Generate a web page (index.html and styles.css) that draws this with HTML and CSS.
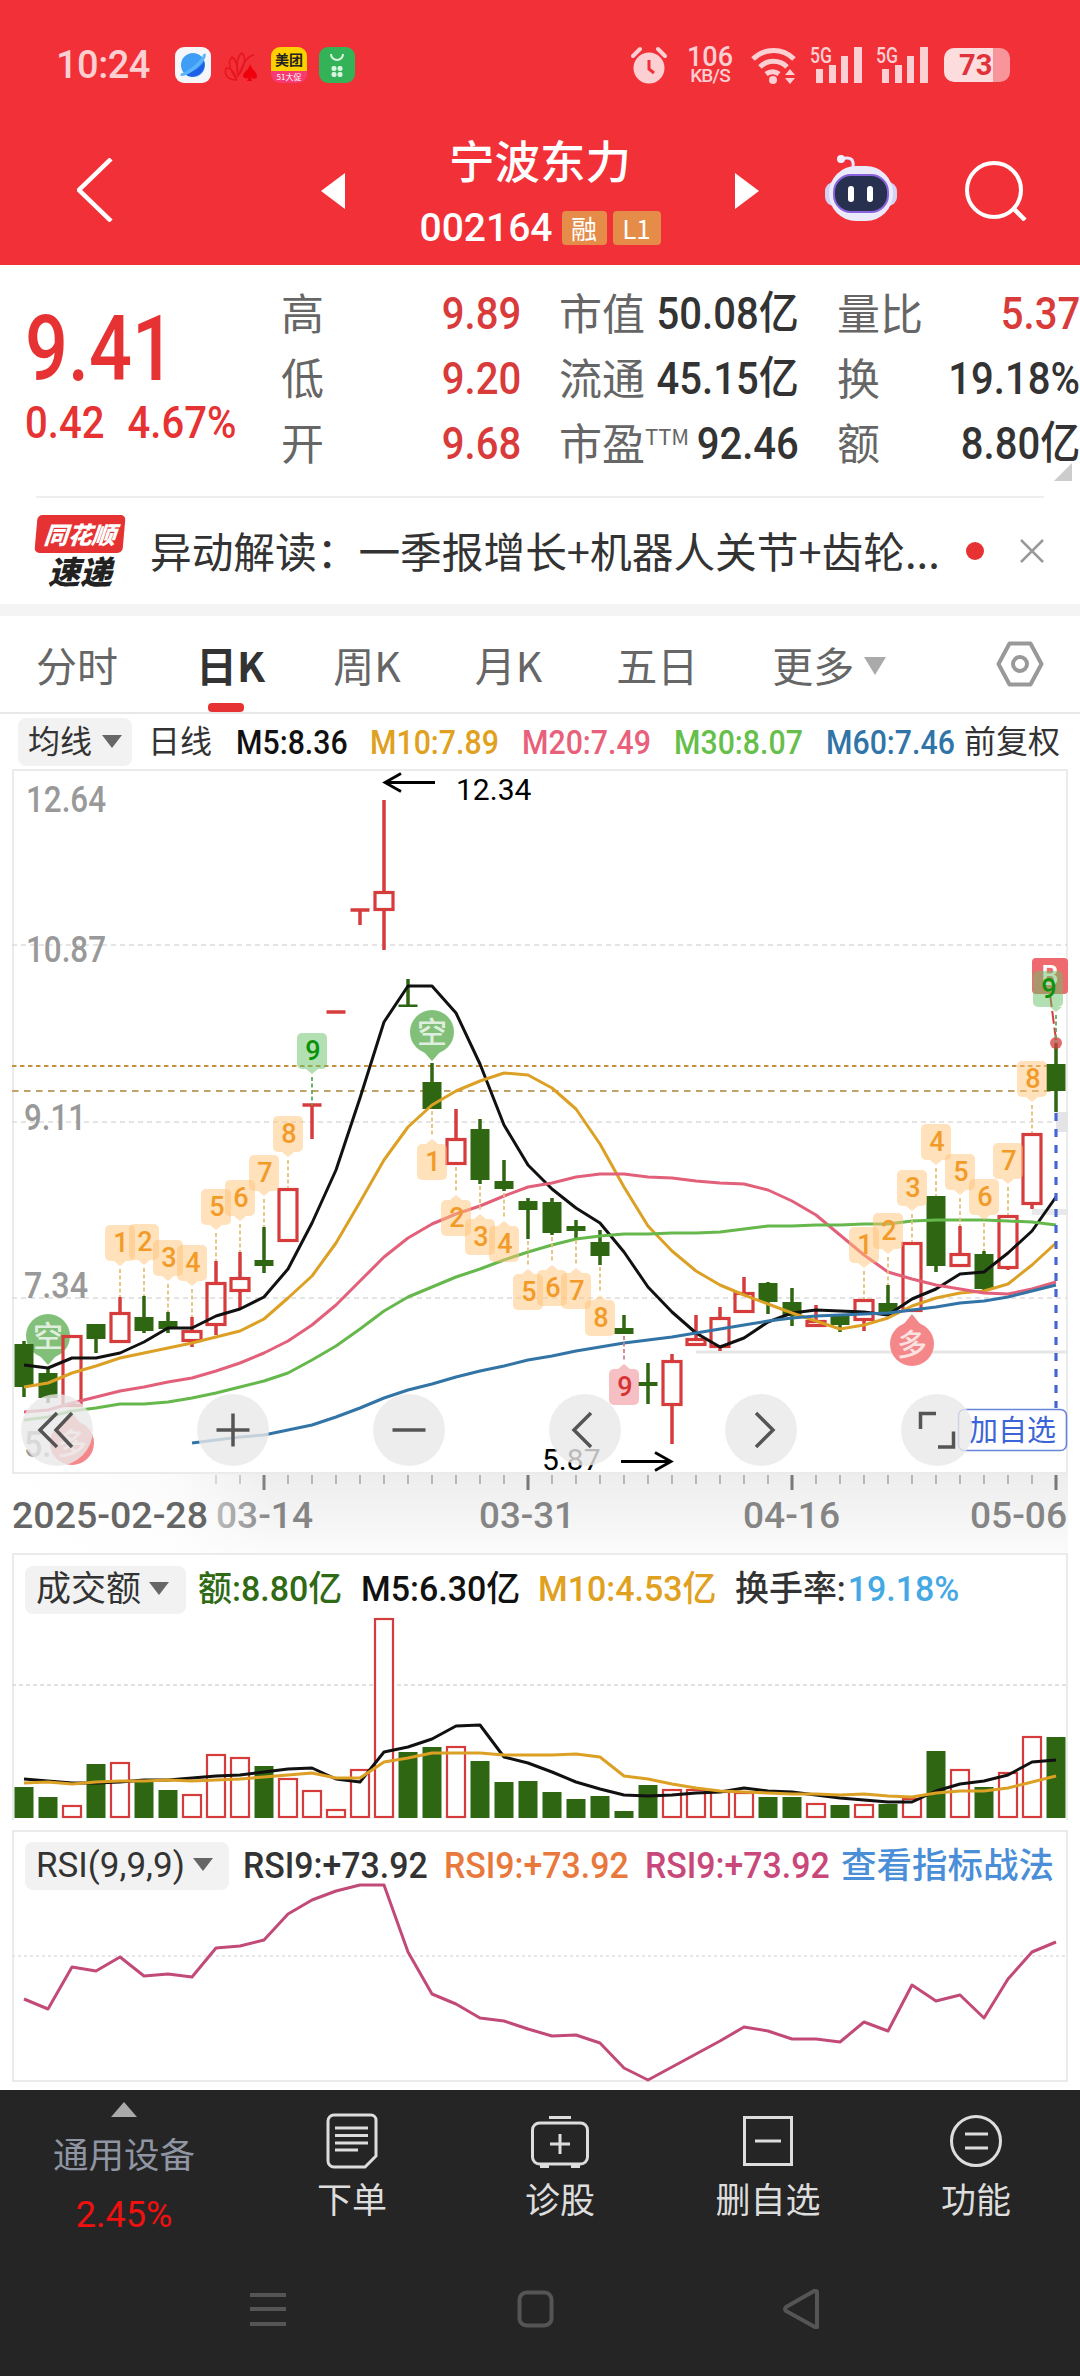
FILE: index.html
```html
<!DOCTYPE html>
<html lang="zh-CN">
<head>
    <meta charset="UTF-8">
    <meta name="viewport" content="width=device-width, initial-scale=1.0">
    <title>宁波东力 002164</title>
    <link rel="stylesheet" href="styles.css">
</head>
<body>
    <div class="top">
        <div class="status">
            <span class="clock">10:24</span>
            <div class="apps">
                <svg width="36" height="36" viewBox="0 0 36 36"><rect width="36" height="36" rx="9" fill="#f4f6fa"/><circle cx="18" cy="18" r="12" fill="#3f9df5"/><path d="M29 14a12 12 0 0 1-19 13C17 26 26 20 29 14z" fill="#1d5fe8"/><path d="M6 27C10 30 32 12 29 7" fill="none" stroke="#5cb4fa" stroke-width="3"/></svg>
                <svg width="36" height="36" viewBox="0 0 36 36"><g fill="none" stroke="#e8141f" stroke-width="1.500"><path d="M14 33C4 33 1 27 3 21c5 0 9 4 11 12C6 22 5 14 9 10c5 3 6 11 6 20C13 19 14 9 19 6c4 4 3 12-3 22C20 16 24 9 31 8"/></g><path d="M27 17c2 6 7 8 7 12 0 3-4 4-6 1l1 4h-5l2-4c-3 3-6 1-6-1 0-4 6-6 7-12z" fill="#f0000c"/></svg>
                <div class="app-mt"><b>美团</b><i>51大促</i></div>
                <svg width="36" height="36" viewBox="0 0 36 36"><rect width="36" height="36" rx="9" fill="#34b257"/><path d="M12 7a6 6 0 0 0 12 0" fill="none" stroke="#d8f5df" stroke-width="2"/><g fill="#d8f5df"><rect x="12.500" y="19" width="5" height="5" rx="2"/><rect x="18.500" y="19" width="5" height="5" rx="2"/><rect x="12.500" y="25" width="5" height="5" rx="2"/><rect x="18.500" y="25" width="5" height="5" rx="2"/></g></svg>
            </div>
            <div class="signals">
                <svg class="alarm" width="36" height="38" viewBox="0 0 36 38"><circle cx="18" cy="22" r="15.500" fill="#fccfd2"/><path d="M2 10 9 3M34 10 27 3" stroke="#fccfd2" stroke-width="4" stroke-linecap="round"/><path d="M18 14v9l5 4" fill="none" stroke="#f03038" stroke-width="3"/></svg>
                <div class="speed"><b>106</b><span>KB/S</span></div>
                <svg class="wifi" width="46" height="38" viewBox="0 0 46 38"><g fill="none" stroke="#fccfd2" stroke-width="5"><path d="M2 13a29 29 0 0 1 41 0"/><path d="M9 21a19 19 0 0 1 27 0"/><path d="M15 28a11 11 0 0 1 13 0"/></g><circle cx="22" cy="34" r="4" fill="#fccfd2"/><path d="M34 29l5-6 5 6zM34 32l5 6 5-6z" fill="#fccfd2"/></svg>
                <svg class="cell" width="54" height="38" viewBox="0 0 54 38"><text x="0" y="17" textLength="22" lengthAdjust="spacingAndGlyphs">5G</text><path d="M6 23h7v14h-7zM19 19h7v18h-7zM31 10h7v27h-7zM44 1h8v36h-8z"/></svg>
                <svg class="cell" width="54" height="38" viewBox="0 0 54 38"><text x="0" y="17" textLength="22" lengthAdjust="spacingAndGlyphs">5G</text><path d="M6 23h7v14h-7zM19 19h7v18h-7zM31 10h7v27h-7zM44 1h8v36h-8z"/></svg>
                <div class="battery"><span>73</span></div>
            </div>
        </div>
        <div class="header">
            <svg class="back" width="36" height="64" viewBox="0 0 36 64"><path d="M34 1 2 32l32 31" fill="none" stroke="#fff" stroke-width="4.500"/></svg>
            <svg class="prev" width="24" height="36" viewBox="0 0 24 36"><path d="M0 18 24 0v36z" fill="#fff"/></svg>
            <div class="stock">
                <div class="name">宁波东力</div>
                <div class="code"><span>002164</span><i>融</i><i class="l1">L1</i></div>
            </div>
            <svg width="24" height="36" viewBox="0 0 24 36"><path d="M24 18 0 0v36z" fill="#fff"/></svg>
            <svg class="robot" width="72" height="68" viewBox="0 0 72 68">
                <path d="M17 4C26 1 29 5 28 12" fill="none" stroke="#e8e6fa" stroke-width="3"/><circle cx="16" cy="4" r="4" fill="#f0effc"/>
                <rect x="0" y="27" width="72" height="24" rx="9" fill="#d4d2f4"/>
                <rect x="4" y="11" width="64" height="55" rx="27" fill="#ebeafb"/>
                <rect x="9" y="20" width="54" height="37" rx="17" fill="#27304f" stroke="#8a62dc" stroke-width="2"/>
                <rect x="23" y="31" width="6" height="16" rx="3" fill="#fff"/><rect x="42" y="31" width="6" height="16" rx="3" fill="#fff"/>
            </svg>
            <svg class="search" width="62" height="60" viewBox="0 0 62 60"><circle cx="29" cy="29" r="27" fill="none" stroke="#fff" stroke-width="4"/><path d="M48 47 60 59" stroke="#fff" stroke-width="4.500"/></svg>
        </div>
    </div>

    <div class="quote">
        <div class="price">
            <div class="last">9.41</div>
            <div class="change"><span>0.42</span><span>4.67%</span></div>
        </div>
        <div class="col">
            <div class="row"><label>高</label><b class="up">9.89</b></div>
            <div class="row"><label>低</label><b class="up">9.20</b></div>
            <div class="row"><label>开</label><b class="up">9.68</b></div>
        </div>
        <div class="col">
            <div class="row"><label>市值</label><b>50.08亿</b></div>
            <div class="row"><label>流通</label><b>45.15亿</b></div>
            <div class="row"><label>市盈<sup>TTM</sup></label><b>92.46</b></div>
        </div>
        <div class="col">
            <div class="row"><label>量比</label><b class="up">5.37</b></div>
            <div class="row"><label>换</label><b>19.18%</b></div>
            <div class="row"><label>额</label><b>8.80亿</b></div>
        </div>
        <span class="corner"></span>
    </div>

    <div class="news">
        <div class="logo"><b>同花顺</b><span>速递</span></div>
        <div class="headline">异动解读：一季报增长+机器人关节+齿轮...</div>
        <span class="dot"></span>
        <svg width="24" height="24" viewBox="0 0 24 24"><path d="M1 1 23 23M23 1 1 23" stroke="#999" stroke-width="2.500"/></svg>
    </div>

    <div class="tabs">
        <span class="first">分时</span>
        <span class="active">日K</span>
        <span>周K</span>
        <span>月K</span>
        <span>五日</span>
        <span>更多<i class="tri"></i></span>
        <svg width="48" height="46" viewBox="0 0 48 46"><path d="M13.500 2.500h21L45.500 23l-11 20.500h-21L2.500 23z" fill="none" stroke="#999" stroke-width="4" stroke-linejoin="round"/><circle cx="24" cy="23" r="7" fill="none" stroke="#999" stroke-width="4"/></svg>
    </div>

    <div class="legend ma">
        <span class="pill">均线<i class="tri"></i></span>
        <span class="dayline">日线</span>
        <span class="m m5">M5:8.36</span>
        <span class="m m10">M10:7.89</span>
        <span class="m m20">M20:7.49</span>
        <span class="m m30">M30:8.07</span>
        <span class="m m60">M60:7.46</span>
        <span class="fq">前复权</span>
    </div>
    <svg id="kline" width="1080" height="705" viewBox="0 769 1080 705"></svg>
    <svg id="axis" width="1080" height="79" viewBox="0 1474 1080 79"></svg>

    <div class="panel vol">
        <div class="legend">
            <span class="pill">成交额<i class="tri"></i></span>
            <span class="amount">额:8.80亿</span>
            <span class="m5">M5:6.30亿</span>
            <span class="m10">M10:4.53亿</span>
            <span class="rate">换手率:<em>19.18%</em></span>
        </div>
        <svg id="volume" width="1080" height="206" viewBox="0 1614 1080 206"></svg>
    </div>
    <div class="panel rsi">
        <div class="legend">
            <span class="pill">RSI(9,9,9)<i class="tri"></i></span>
            <span class="r r1">RSI9:+73.92</span>
            <span class="r r2">RSI9:+73.92</span>
            <span class="r r3">RSI9:+73.92</span>
            <span class="link">查看指标战法</span>
        </div>
        <svg id="rsi" width="1080" height="191" viewBox="0 1890 1080 191"></svg>
    </div>

    <div class="bottom">
        <div class="actions">
            <div class="sector"><i class="tri-up"></i><span>通用设备</span><b>2.45%</b></div>
            <div class="action">
                <svg width="60" height="56" viewBox="0 0 60 56"><path d="M12 2h37a5 5 0 0 1 5 5v36L43 54H12a6 6 0 0 1-6-6V8a6 6 0 0 1 6-6zM13 15h33M13 22.500h33M13 30h33M13 37h23"/></svg>
                <span>下单</span>
            </div>
            <div class="action">
                <svg width="60" height="56" viewBox="0 0 60 56"><rect x="2.500" y="10" width="55" height="41" rx="7"/><path d="M19 4.500h22M30 21v20M20 31h20M10 53.500h9M41 53.500h9"/></svg>
                <span>诊股</span>
            </div>
            <div class="action">
                <svg width="60" height="56" viewBox="0 0 60 56"><rect x="6.500" y="4.500" width="47" height="47"/><path d="M17 28h26"/></svg>
                <span>删自选</span>
            </div>
            <div class="action">
                <svg width="60" height="56" viewBox="0 0 60 56"><circle cx="30" cy="28" r="24.500"/><path d="M19 21h23M19 35h23"/></svg>
                <span>功能</span>
            </div>
        </div>
        <div class="sysnav">
            <svg width="38" height="40" viewBox="0 0 38 40"><path d="M1 6h36M1 20h36M1 35h36"/></svg>
            <svg width="38" height="40" viewBox="0 0 38 40"><rect x="3.500" y="3.500" width="32" height="33" rx="7"/></svg>
            <svg width="38" height="40" viewBox="0 0 38 40"><path d="M34 2v36a2 2 0 0 1-2 0L3 22a3 3 0 0 1 0-4L31 2a2 2 0 0 1 3 1z"/></svg>
        </div>
    </div>
    <script src="chart.js"></script>
</body>
</html>
```
FILE: styles.css
```css
* {
    box-sizing: border-box;
}
body {
    margin: 0;
    width: 1080px;
    background: #fff;
    color: #333;
    font-family: Roboto, "Noto Sans CJK SC", sans-serif;
}
svg {
    display: block;
    flex: none;
}
i, em {
    font-style: normal;
}

/* header */
.top {
    height: 265px;
    background: #f23038;
    color: #fff;
}
.status {
    display: flex;
    align-items: center;
    height: 130px;
    padding: 0 70px 0 56px;
    color: #fccfd2;
}
.clock {
    width: 119px;
    font-size: 38px;
    font-weight: 500;
    letter-spacing: -0.5px;
}
.apps {
    display: flex;
    gap: 12px;
}
.app-mt {
    width: 36px;
    height: 36px;
    border-radius: 9px;
    background: linear-gradient(#ffd000 66%, #f83a74 66%);
    text-align: center;
}
.app-mt b {
    display: block;
    color: #222;
    font: bold 14px/25px "Noto Sans CJK SC", sans-serif;
}
.app-mt i {
    display: block;
    color: #fff;
    font: 8px/10px "Noto Sans CJK SC", sans-serif;
}
.signals {
    display: flex;
    align-items: center;
    margin-left: auto;
}
.speed {
    width: 50px;
    margin: 0 16px 0 18px;
    text-align: center;
}
.speed b {
    display: block;
    font-size: 27px;
    font-weight: 500;
    line-height: 22px;
}
.speed span {
    display: block;
    font-size: 19px;
    font-weight: 500;
    line-height: 16px;
    letter-spacing: -0.8px;
}
.wifi {
    margin-right: 13px;
}
.cell {
    margin-right: 12px;
    fill: #fccfd2;
    font: 500 22px Roboto, sans-serif;
}
.battery {
    width: 66px;
    height: 34px;
    margin-left: 2px;
    border-radius: 10px;
    background: linear-gradient(90deg, #fddcde 49px, #f7959a 49px);
    color: #e0323a;
    font-weight: bold;
    font-size: 29px;
    line-height: 35px;
    padding-left: 15px;
}
.header {
    display: flex;
    align-items: center;
    height: 134px;
    padding: 0 0 12px 77px;
}
.back {
    margin: 0 208px 2px 0;
}
.stock {
    width: 390px;
    text-align: center;
}
.name {
    font: 500 45.500px/74px "Noto Sans CJK SC", sans-serif;
}
.code {
    display: flex;
    justify-content: center;
    align-items: center;
    height: 64px;
    font-size: 39px;
}
.code span {
    width: 142px;
    text-align: left;
    font-weight: 500;
}
.code i {
    width: 45px;
    height: 34px;
    border-radius: 4px;
    background: #e58c48;
    font: 26px/33px "Noto Sans CJK SC", sans-serif;
}
.code .l1 {
    width: 48px;
    margin-left: 6px;
}
.robot {
    margin: 0 68px 4px 66px;
}

/* quote */
.quote {
    position: relative;
    display: flex;
    height: 231px;
    padding-top: 16px;
}
.price {
    width: 281px;
    padding: 18px 0 0 25px;
    color: #e63232;
}
.last {
    font-size: 90px;
    font-weight: 500;
    line-height: 102px;
    transform: scaleX(0.840);
    transform-origin: left;
}
.change {
    display: flex;
    gap: 26px;
    font-size: 45px;
    font-weight: 500;
    line-height: 44px;
    transform: scaleX(0.890);
    transform-origin: left;
}
.col {
    width: 240px;
    margin-right: 38px;
}
.col:nth-child(4) {
    margin-right: 0;
    width: 243px;
}
.row {
    display: flex;
    justify-content: space-between;
    align-items: center;
    height: 65px;
    font-size: 43px;
    white-space: nowrap;
}
.row label {
    margin-bottom: 5px;
    color: #666;
    font-family: "Noto Sans CJK SC", sans-serif;
    line-height: 65px;
}
/* narrow digits */
.row b {
    margin-left: -24px;
    color: #333;
    font-size: 45px;
    font-weight: 500;
    line-height: 65px;
    transform: scaleX(0.890);
    transform-origin: right;
}
.row .up {
    color: #d93a3a;
}
.row sup {
    font-size: 22px;
    line-height: 0;
    vertical-align: 15px;
}
.corner {
    position: absolute;
    right: 8px;
    bottom: 15px;
    border-left: 18px solid transparent;
    border-bottom: 18px solid #ccc;
}

/* news */
.news {
    display: flex;
    align-items: center;
    height: 108px;
    margin: 0 36px;
    border-top: 2px solid #eee;
}
.logo {
    width: 88px;
    margin-right: 26px;
    text-align: center;
    font-family: "Noto Sans CJK SC", sans-serif;
    font-style: italic;
}
.logo b {
    display: block;
    height: 38px;
    border-radius: 5px;
    background: #e63232;
    color: #fff;
    font-size: 24px;
    font-weight: 900;
    line-height: 37px;
    transform: skewX(-5deg);
}
.logo span {
    display: block;
    color: #222;
    font-size: 32px;
    font-weight: 900;
    line-height: 35px;
}
.headline {
    width: 816px;
    font: 41.700px/60px "Noto Sans CJK SC", sans-serif;
    white-space: nowrap;
    margin-bottom: 2px;
}
.dot {
    width: 18px;
    height: 18px;
    margin-right: 36px;
    border-radius: 50%;
    background: #e63232;
}

/* tabs */
.tabs {
    display: flex;
    align-items: center;
    height: 110px;
    border-top: 12px solid #f4f4f4;
    border-bottom: 2px solid #e8e8e8;
    padding: 0 36px;
    color: #666;
    font: 41px/96px "Noto Sans CJK SC", sans-serif;
}
.tabs span {
    margin-right: 74px;
    white-space: nowrap;
}
.tabs .first {
    margin-right: 78px;
}
.tabs .active {
    position: relative;
    margin-right: 68px;
    color: #333;
    font-weight: bold;
}
.tabs .active::after {
    content: "";
    position: absolute;
    left: 12px;
    bottom: 0;
    width: 36px;
    height: 9px;
    border-radius: 4px;
    background: #e63232;
}
.tabs svg {
    margin-left: auto;
}
.tri {
    display: inline-block;
    margin: 0 0 6px 10px;
    vertical-align: middle;
    border: 10px solid transparent;
    border-top: 13px solid #666;
    border-bottom: 0;
}
.tabs .tri {
    border-width: 18px 11px 0;
    border-top-color: #aaa;
    margin-bottom: 9px;
}

/* legends */
.legend {
    display: flex;
    align-items: center;
    font-size: 36px;
    line-height: 48px;
    white-space: nowrap;
}
.pill {
    flex: none;
    border-radius: 8px;
    background: #f2f2f2;
}
.ma {
    height: 55px;
    padding-left: 18px;
    font-size: 34px;
}
.ma .pill {
    width: 114px;
    padding-left: 10px;
}
.ma .pill, .ma .dayline, .ma .fq {
    font-size: 32px;
}
.dayline {
    width: 88px;
    margin-left: 16px;
}
.m, .r {
    flex: none;
    font-weight: 500;
    transform: scaleX(0.890);
    transform-origin: left;
}
.m {
    width: 152px;
}
.ma .m5 {
    width: 134px;
}
.ma .m60 {
    width: 138px;
}
.m5 {
    color: #111;
}
.m10 {
    color: #e0a020;
}
.m20 {
    color: #e8607a;
}
.m30 {
    color: #66bf4a;
}
.m60 {
    color: #3074a8;
}
.panel {
    margin: 0 12px;
    border: 2px solid #ebebeb;
}
.panel svg {
    margin-left: -14px;
    overflow: visible;
}
.panel .legend {
    padding-left: 11px;
}
.vol {
    height: 267px;
    border-bottom: 0;
}
.vol .legend {
    height: 59px;
    padding-top: 10px;
    font-size: 35px;
}
.vol .pill {
    width: 161px;
    padding-left: 11px;
    margin-right: 12px;
}
.vol .tri, .rsi .tri {
    margin-left: 8px;
}
.amount, .vol .m5, .vol .m10, .rate {
    flex: none;
    font-weight: 500;
    transform: scaleX(0.970);
    transform-origin: left;
}
.amount {
    width: 163px;
    color: #2f6a14;
}
.vol .m5 {
    width: 177px;
}
.vol .m10 {
    width: 197px;
}
.rate em {
    color: #44a8e4;
    margin-left: 2px;
}
.rsi {
    margin-top: 10px;
    height: 252px;
}
.rsi .legend {
    height: 58px;
    padding-top: 10px;
}
.rsi .pill {
    width: 204px;
    padding-left: 11px;
    margin-right: 14px;
    font-size: 35px;
}
.r {
    width: 201px;
    transform: scaleX(0.940);
}
.r2 {
    color: #e8783c;
}
.r3 {
    width: 196px;
    color: #c8487a;
}
.link {
    color: #4a8ed8;
    font-size: 35.500px;
    font-weight: 500;
}

/* chart texts */
.price-label {
    fill: #999;
    font: 500 36px Roboto, sans-serif;
}
.extreme {
    fill: #000;
    font: 30px Roboto, sans-serif;
}
.date {
    fill: #858585;
    font: 500 36px Roboto, sans-serif;
}
.first-date {
    fill: #666;
}
.mark {
    font: 500 27px Roboto, sans-serif;
    text-anchor: middle;
}
.pin {
    fill: #fff;
    fill-opacity: 0.750;
    font: 500 30px "Noto Sans CJK SC", sans-serif;
    text-anchor: middle;
}
.add {
    fill: #3c64d8;
    font: 29px "Noto Sans CJK SC", sans-serif;
}

/* bottom */
.bottom {
    height: 286px;
    margin-top: 8px;
    background: #252525;
}
.actions {
    display: flex;
    height: 160px;
}
.sector {
    display: flex;
    flex-direction: column;
    align-items: center;
    width: 248px;
    padding-top: 12px;
    color: #8f95a3;
    font: 35.500px/52px "Noto Sans CJK SC", sans-serif;
}
.sector span {
    margin-top: 10px;
}
.sector b {
    margin-top: 10px;
    color: #f01010;
    font: 36px/52px Roboto, sans-serif;
}
.tri-up {
    border: 13px solid transparent;
    border-bottom: 15px solid #aaa;
    border-top: 0;
}
.action {
    display: flex;
    flex-direction: column;
    align-items: center;
    width: 208px;
    padding-top: 23px;
    color: #ddd;
    font: 35px/58px "Noto Sans CJK SC", sans-serif;
}
.action svg {
    fill: none;
    stroke: #ddd;
    stroke-width: 3;
}
.sysnav {
    display: flex;
    gap: 229px;
    padding: 39px 0 0 249px;
}
.sysnav svg {
    fill: none;
    stroke: #555;
    stroke-width: 4;
}
```
FILE: chart.js
```javascript
const RED = '#d63c3c', GREEN = '#2f6612';
const x = i => 24 + i * 24;

// [color, body top, body bottom, high, low]
const candles = [
    ['g', 1344, 1387, 1341, 1397], ['g', 1373, 1398, 1368, 1403], ['r', 1335, 1407, 1335, 1407],
    ['g', 1324, 1339, 1324, 1353], ['r', 1312, 1343, 1297, 1343], ['g', 1317, 1331, 1296, 1333],
    ['g', 1321, 1329, 1312, 1333], ['r', 1330, 1342, 1317, 1347], ['r', 1282, 1326, 1261, 1335],
    ['r', 1277, 1292, 1252, 1309], ['g', 1260, 1266, 1227, 1273], ['r', 1188, 1242, 1188, 1242],
    ['r', 1105, 1105, 1105, 1139], ['r', 1012, 1012, 1012, 1012], ['r', 910, 910, 910, 925],
    ['r', 891, 911, 800, 950], ['g', 1004.5, 1007, 979, 1007], ['g', 1082, 1109, 1063, 1109],
    ['r', 1138, 1165, 1109, 1165], ['g', 1129, 1180, 1119, 1184], ['g', 1181, 1189, 1160, 1191],
    ['g', 1201, 1210, 1198, 1239], ['g', 1202, 1233, 1198, 1235], ['g', 1226, 1231, 1220, 1238],
    ['g', 1242, 1256, 1230, 1265], ['g', 1328, 1334, 1315, 1334], ['g', 1382, 1386, 1363, 1404],
    ['r', 1360, 1406, 1354, 1444], ['r', 1338, 1346, 1315, 1346], ['r', 1317, 1348, 1307, 1351],
    ['r', 1292, 1313, 1277, 1313], ['g', 1283, 1302, 1282, 1314], ['g', 1302, 1316, 1288, 1326],
    ['r', 1320, 1327, 1305, 1327], ['g', 1316, 1325, 1314, 1332], ['r', 1299, 1321, 1299, 1331],
    ['g', 1303, 1315, 1285, 1315], ['r', 1242, 1312, 1242, 1312], ['g', 1196, 1266, 1196, 1272],
    ['r', 1253, 1267, 1226, 1267], ['g', 1254, 1289, 1251, 1291], ['r', 1215, 1269, 1215, 1270],
    ['r', 1133, 1205, 1133, 1209], ['g', 1064, 1091, 1043, 1112]
];
const ma5 = [1365,1368,1358,1358,1353,1342,1328,1328,1316,1309,1297,1269,1223,1170,1098,1022,986,986,1013,1064,1125,1165,1189,1208,1223,1252,1287,1312,1333,1347,1338,1322,1313,1310,1311,1312,1315,1299,1289,1274,1272,1253,1231,1197];
const ma10 = [1387,1383,1373,1366,1358,1353,1348,1343,1337,1331,1319,1298,1276,1243,1202,1160,1127,1105,1091,1081,1073,1075,1088,1109,1144,1187,1226,1251,1271,1285,1295,1304,1313,1321,1329,1325,1318,1306,1298,1293,1291,1284,1265,1243];
const ma20 = [1412,1410,1403,1397,1391,1387,1382,1378,1371,1363,1353,1341,1325,1305,1281,1257,1238,1224,1214,1206,1196,1187,1183,1177,1174,1174,1177,1178,1181,1183,1184,1190,1201,1215,1235,1255,1272,1279,1285,1289,1293,1294,1289,1282];
const ma30 = [1420,1417,1411,1408,1404,1404,1402,1398,1393,1387,1381,1373,1360,1346,1329,1311,1297,1287,1277,1269,1260,1252,1245,1239,1236,1234,1234,1233,1233,1232,1229,1226,1226,1225,1225,1224,1224,1221,1220,1220,1220,1221,1222,1225];
const ma60 = [1443,1440,1437,1435,1430,1425,1417,1408,1398,1390,1384,1377,1371,1366,1360,1356,1351,1347,1343,1340,1337,1333,1329,1325,1321,1318,1316,1315,1314,1313,1310,1307,1303,1301,1297,1291,1285];
const volumes = [1787,1797,1805,1764,1762,1782,1790,1794,1754,1757,1766,1778,1790,1809,1769,1618,1752,1747,1746,1761,1782,1781,1792,1799,1796,1811,1785,1789,1789,1791,1792,1797,1797,1803,1805,1804,1804,1798,1751,1769,1787,1772,1736,1737];
const vma5 = [1779,1781,1783,1783,1782,1780,1780,1778,1776,1775,1772,1769,1768,1779,1782,1752,1747,1739,1726,1725,1757,1763,1772,1782,1789,1795,1796,1795,1793,1792,1788,1791,1792,1795,1798,1800,1802,1802,1791,1784,1781,1775,1762,1760];
const vma10 = [1783,1782,1784,1782,1781,1781,1780,1781,1780,1779,1777,1775,1773,1778,1778,1762,1758,1753,1753,1753,1755,1755,1755,1754,1757,1776,1779,1784,1788,1791,1792,1793,1794,1794,1795,1794,1796,1797,1793,1791,1791,1788,1782,1776];
const rsi = [1999,2009,1967,1971,1957,1976,1974,1977,1948,1946,1940,1914,1900,1891,1885,1885,1952,1994,2004,2018,2021,2029,2036,2035,2043,2068,2080,2067,2054,2041,2027,2031,2039,2039,2042,2022,2031,1985,2001,1995,2018,1979,1952,1942];

function line(x1, y1, x2, y2, color, w, dash) {
    return `<line x1="${x1}" y1="${y1}" x2="${x2}" y2="${y2}" stroke="${color}" stroke-width="${w}"${dash ? ` stroke-dasharray="${dash}"` : ''}/>`;
}
function curve(data, color, start = 0) {
    const pts = data.map((y, i) => `${x(i + start)},${y}`).join(' ');
    return `<polyline points="${pts}" fill="none" stroke="${color}" stroke-width="3" stroke-linejoin="round"/>`;
}
function text(cls, tx, ty, s, len) {
    return `<text class="${cls}" x="${tx}" y="${ty}"${len ? ` textLength="${len}" lengthAdjust="spacingAndGlyphs"` : ''}>${s}</text>`;
}
function candle([c, top, bottom, high, low], i) {
    const color = c === 'r' ? RED : GREEN;
    if (c === 'g') {
        return line(x(i), high, x(i), low, color, 3.5) + `<rect x="${x(i) - 9.5}" y="${top}" width="19" height="${bottom - top}" fill="${color}"/>`;
    }
    if (top === bottom) {
        return line(x(i) - 9.5, top, x(i) + 9.5, top, color, 3.5) + line(x(i), top, x(i), low, color, 3.5);
    }
    return line(x(i), high, x(i), top, color, 3.5) + line(x(i), bottom, x(i), low, color, 3.5)
        + `<rect x="${x(i) - 9}" y="${top + 1.5}" width="18" height="${bottom - top - 3}" fill="none" stroke="${color}" stroke-width="3.2"/>`;
}
// numbered tag above (up) or below the candle
function mark(i, n, up, shift = 0) {
    const fill = n < 9 ? '#ffc478' : up ? '#66c266' : '#ee808a';
    const ink = n < 9 ? '#f29b28' : up ? '#0a930a' : '#d63434';
    const dash = n < 9 ? '#e6c07c' : up ? '#5faa5f' : '#d08088';
    const cx = x(i), rx = cx + shift;
    const top = up ? candles[i][3] - 72 : candles[i][4] + 35;
    const tip = up ? `M${cx - 6} ${top + 36}l6 5 6-5z` : `M${cx - 6} ${top}l6-5 6 5z`;
    const dashes = up ? line(cx, top + 44, cx, candles[i][3], dash, 1.8, '4 2.5') : line(cx, candles[i][4] + 2, cx, top - 7, dash, 1.8, '4 2.5');
    return dashes + `<g fill="${fill}" fill-opacity="0.5"><rect x="${rx - 15}" y="${top}" width="30" height="36" rx="5"/><path d="${tip}"/></g>`
        + `<text class="mark" x="${rx + 1}" y="${top + 27}" fill="${ink}">${n}</text>`;
}
function pin(cx, cy, s, up) {
    const color = up ? '#f48789' : '#82c07a';
    const d = up ? `M${cx - 9} ${cy - 19}L${cx} ${cy - 30}L${cx + 9} ${cy - 19}z` : `M${cx - 9} ${cy + 19}L${cx} ${cy + 29}L${cx + 9} ${cy + 19}z`;
    return `<circle cx="${cx}" cy="${cy}" r="22" fill="${color}"/><path d="${d}" fill="${color}"/>` + text('pin', cx, cy + 11, s);
}

let k = `<path d="M13 1473V770H1067V1473z" fill="none" stroke="#ebebeb" stroke-width="2"/>`;
[945, 1122, 1298].forEach(y => k += line(12, y, 1067, y, '#dcdcdc', 1.3, '5 4'));
k += line(12, 1066, 1056, 1066, '#c8913f', 2, '4.5 3.5') + line(12, 1091, 1056, 1091, '#c3a26a', 2, '6.5 5.5');
k += line(696, 1352, 1068, 1352, '#e6e6e6', 3);
k += '<rect x="1056" y="1112" width="12" height="20" fill="#e4e4e6"/><rect x="1032" y="1209" width="36" height="6" fill="#e8e8e8"/>';
k += text('price-label', 26, 812, '12.64', 80) + text('price-label', 26, 962, '10.87', 80) + text('price-label', 24, 1130, '9.11', 62)
    + text('price-label', 24, 1298, '7.34', 64) + text('price-label', 24, 1457, '5.57', 64);
k += pin(48, 1336, '空') + pin(432, 1032, '空') + pin(912, 1344, '多', true) + pin(72, 1443, '多', true);
k += candles.map(candle).join('');
k += curve(ma5, '#111') + curve(ma10, '#dca024') + curve(ma20, '#e2607a') + curve(ma30, '#66b84c') + curve(ma60, '#3274a6', 7);
for (let n = 1; n <= 9; n++) k += mark(n + 3, n, true);
for (let n = 1; n <= 9; n++) k += mark(n + 16, n, false);
k += '<rect x="1032" y="958" width="36" height="36" rx="4" fill="#ef6a6f"/><text class="mark" x="1050" y="985" fill="#fff">B</text>';
k += line(1050, 994, 1056, 1040, '#d63c3c', 2, '13 4') + '<circle cx="1056" cy="1043" r="6" fill="#d63c3c" fill-opacity="0.75"/>';
for (let n = 1; n <= 8; n++) k += mark(n + 34, n, true);
k += mark(43, 9, true, -8);
k += line(1056, 1113, 1056, 1408, '#4468d6', 3.2, '8 8');
k += '<path d="M435 782.500H385M401 773.500 385 782.500 401 791.500M621 1461.500H671M655 1452.500 671 1461.500 655 1470.500" fill="none" stroke="#000" stroke-width="2.800"/>';
k += text('extreme', 456, 800, '12.34') + text('extreme', 542, 1470, '5.87');
k += '<rect x="958.500" y="1409.500" width="108" height="41" rx="6" fill="#fff" stroke="#6684dc" stroke-width="1.600"/>' + text('add', 969, 1441, '加自选');
[57, 233, 409, 585, 761, 937].forEach(cx => k += `<circle cx="${cx}" cy="1430" r="36" fill="#e9e9e9" fill-opacity="0.8"/>`);
k += '<path d="M57 1413 40 1430 57 1447M72 1413 56 1430 72 1447M233 1413.500v33M216.500 1430h33M392.500 1430h33M591 1413 574 1430 591 1447M756 1413 773 1430 756 1447M936 1413.500H920.500V1429M938 1447H953.500V1431.500" fill="none" stroke="#555" stroke-width="3.500"/>';
document.getElementById('kline').innerHTML = k;

let a = `<defs><linearGradient id="fade" x2="0" y2="1"><stop offset="0" stop-color="#ededed"/><stop offset="1" stop-color="#fbfbfb"/></linearGradient>
    <linearGradient id="veil"><stop offset="0" stop-color="#fff"/><stop offset="0.6" stop-color="#fff" stop-opacity="0.8"/><stop offset="1" stop-color="#fff" stop-opacity="0"/></linearGradient></defs>
    <rect x="12" y="1474" width="1056" height="79" fill="url(#fade)"/>`;
for (let i = 8; i < 44; i++) {
    a += i % 11 === 10 ? line(x(i), 1475, x(i), 1490, '#777', 3) : line(x(i), 1475, x(i), 1484, '#999', 1.3);
}
a += text('date', 216, 1528, '03-14', 97) + text('date', 479, 1528, '03-31', 96) + text('date', 743, 1528, '04-16', 97) + text('date', 970, 1528, '05-06', 97);
a += '<rect x="12" y="1474" width="262" height="79" fill="url(#veil)"/>' + text('date first-date', 12, 1528, '2025-02-28', 196);
document.getElementById('axis').innerHTML = a;

let v = line(12, 1685, 1067, 1685, '#d8d8d8', 1.500, '4 3');
volumes.forEach((y, i) => {
    v += candles[i][0] === 'g' ? `<rect x="${x(i) - 9.500}" y="${y}" width="19" height="${1818 - y}" fill="${GREEN}"/>`
        : `<rect x="${x(i) - 9}" y="${y + 1}" width="18" height="${1816 - y}" fill="#fff" stroke="${RED}" stroke-width="2.200"/>`;
});
v += curve(vma5, '#111') + curve(vma10, '#dca024');
document.getElementById('volume').innerHTML = v;

document.getElementById('rsi').innerHTML = line(12, 1956, 1067, 1956, '#e0e0e0', 1.500, '3 3') + curve(rsi, '#c24a78');
```
